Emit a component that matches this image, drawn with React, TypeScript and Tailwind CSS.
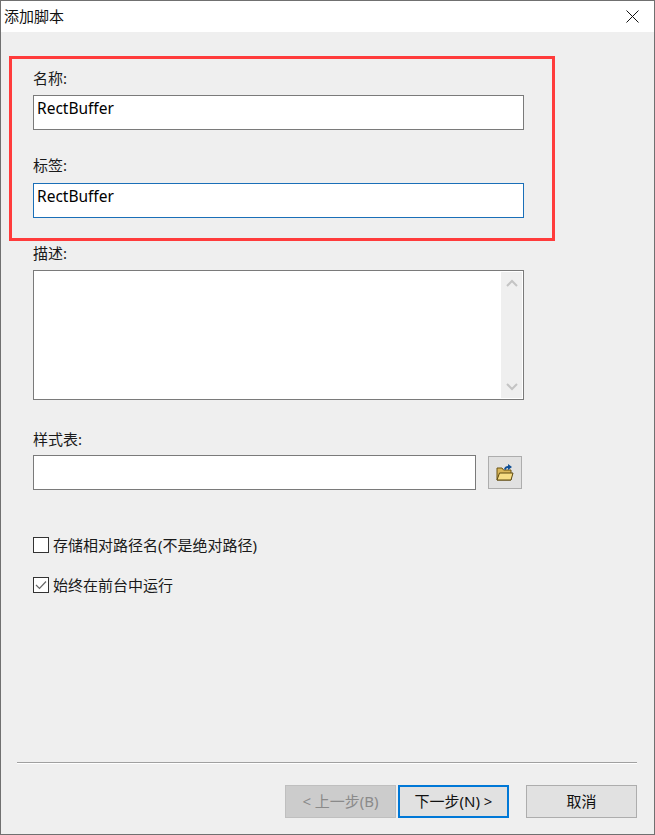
import React from "react";

function Label({ children, className = "" }: { children: React.ReactNode; className?: string }) {
  return <div className={"h-[17px] text-[15px] leading-[16px] text-[#1a1a1a] " + className}>{children}</div>;
}

function TextBox({ value, focused = false }: { value: string; focused?: boolean }) {
  return (
    <div
      className={
        "h-[35px] w-[491px] border bg-white pl-[3px] pt-[1px] text-[15.5px] leading-[22px] text-black " +
        (focused ? "border-[#1a6fb8]" : "border-[#7a7a7a]")
      }
    >
      {value}
    </div>
  );
}

function Btn({ children, cls }: { children: React.ReactNode; cls: string }) {
  return (
    <div className={"flex h-[33px] w-[111px] items-center justify-center text-[15px] " + cls}>{children}</div>
  );
}

export default function App() {
  return (
    <div className="relative flex h-[835px] w-[655px] flex-col border border-[#707070] bg-[#efefef] font-['Noto_Sans','Noto_Sans_CJK_SC',sans-serif]">
      <div className="flex h-[31px] items-center justify-between bg-white pl-[3px] pr-[14px] text-[15px] text-[#111]">
        <span>添加脚本</span>
        <svg width="13" height="13" viewBox="0 0 13 13" className="mr-[1px]">
          <path d="M0.5 0.5 L12.5 12.5 M12.5 0.5 L0.5 12.5" stroke="#111" strokeWidth="1" fill="none" />
        </svg>
      </div>

      <div className="flex flex-1 flex-col pl-[32px]">
        <Label className="mt-[38px]">名称:</Label>
        <div className="mt-[8px]"><TextBox value="RectBuffer" /></div>
        <Label className="mt-[27px]">标签:</Label>
        <div className="mt-[9px]"><TextBox value="RectBuffer" focused /></div>
        <Label className="mt-[27px]">描述:</Label>
        <div className="mt-[8px] flex h-[130px] w-[491px] border border-[#7a7a7a] bg-white p-[1px]">
          <div className="flex-1" />
          <div className="flex w-[21px] flex-col items-center justify-between bg-[#efefef] py-[7px]">
            <svg width="12" height="8" viewBox="0 0 12 8">
              <path d="M1 7 L6 2 L11 7" stroke="#c4c4c4" strokeWidth="2" fill="none" />
            </svg>
            <svg width="12" height="8" viewBox="0 0 12 8">
              <path d="M1 1 L6 6 L11 1" stroke="#c4c4c4" strokeWidth="2" fill="none" />
            </svg>
          </div>
        </div>
        <Label className="mt-[31px]">样式表:</Label>
        <div className="mt-[7px] flex items-center">
          <div className="h-[35px] w-[443px] border border-[#7a7a7a] bg-white" />
          <div className="ml-[12px] flex h-[33px] w-[34px] items-center justify-center border border-[#adadad] bg-[#e1e1e1]">
            <svg width="18" height="18" viewBox="0 0 18 18">
              <path d="M1 4 H6 L7.5 6 H15 V16 H1 Z" fill="#d9b65a" stroke="#6b5310" strokeWidth="1" />
              <path d="M3.5 9 H17 L15 16 H1 Z" fill="#f7dd85" stroke="#5e4a10" strokeWidth="1" />
              <path d="M8 5 Q9 2 12 2 V0 L16 3 L12 6 V4 Q10 4 9.5 6 Z" fill="#0f4f96" />
            </svg>
          </div>
        </div>

        <div className="mt-[46px] flex h-[18px] items-center">
          <div className="h-[16px] w-[16px] border border-[#333] bg-white" />
          <span className="ml-[4px] text-[15px] leading-[16px] text-[#1a1a1a]">存储相对路径名(不是绝对路径)</span>
        </div>
        <div className="mt-[22px] flex h-[18px] items-center">
          <div className="flex h-[16px] w-[16px] items-center justify-center border border-[#333] bg-white">
            <svg width="12" height="10" viewBox="0 0 12 10">
              <path d="M1 5 L4.5 8.5 L11 1.5" stroke="#666" strokeWidth="1.2" fill="none" />
            </svg>
          </div>
          <span className="ml-[4px] text-[15px] leading-[16px] text-[#1a1a1a]">始终在前台中运行</span>
        </div>
      </div>

      <div className="ml-[16px] mr-[17px] mb-[21px] h-[2px] border-t border-b border-t-[#a0a0a0] border-b-white" />
      <div className="mb-[16px] flex justify-end pr-[17px]">
        <Btn cls="border border-[#bfbfbf] bg-[#cccccc] text-[#8a8a8a]">{"< 上一步(B)"}</Btn>
        <Btn cls="ml-[2px] border-2 border-[#0078d7] bg-[#e1e1e1] text-[#111]">{"下一步(N) >"}</Btn>
        <Btn cls="ml-[17px] border border-[#adadad] bg-[#e1e1e1] text-[#111]">取消</Btn>
      </div>

      <div className="pointer-events-none absolute left-[8px] top-[55px] h-[185px] w-[546px] border-[3px] border-[#ff3b3b]" />
    </div>
  );
}
